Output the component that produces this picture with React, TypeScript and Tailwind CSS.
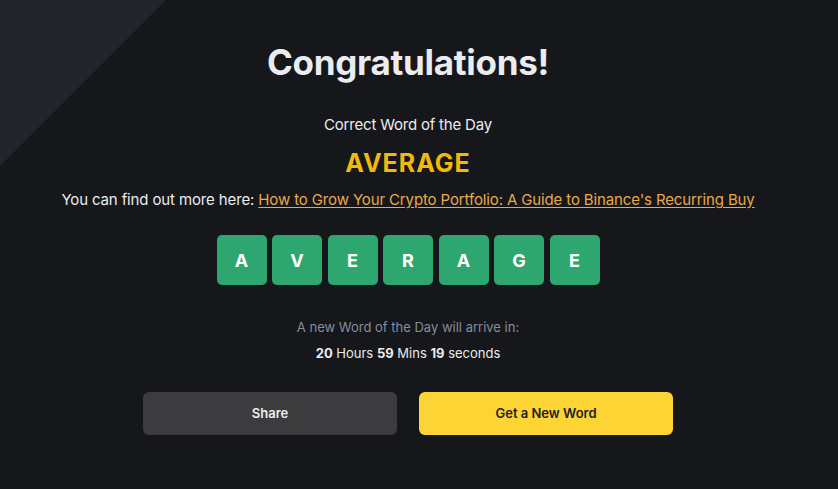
const word = ['A', 'V', 'E', 'R', 'A', 'G', 'E']

const App = () => {
  return (
    <div
      className="relative w-full h-[489px] overflow-hidden bg-[#16171b]"
      style={{ fontFamily: 'Inter, "Noto Sans", sans-serif' }}
    >
      <div className="absolute left-0 top-0 w-[166px] h-[166px] bg-[#23252c] [clip-path:polygon(0_0,100%_0,0_100%)]" />
      <div className="relative w-[816px] flex flex-col items-center pt-[38px]">
        <h1 className="text-[35px] leading-[48px] font-bold text-[#eaecef] tracking-[-0.3px]">
          Congratulations!
        </h1>
        <p className="mt-[29px] text-[15px] leading-[20px] text-[#eaecef] tracking-[-0.2px]">
          Correct Word of the Day
        </p>
        <p className="mt-[12px] text-[25px] leading-[32px] font-bold text-[#f0b90b] tracking-[1px]">
          AVERAGE
        </p>
        <p className="mt-[11px] text-[15px] leading-[20px] text-[#eaecef] tracking-[-0.13px]">
          You can find out more here:{' '}
          <a href="#" className="text-[#e8a94b] underline underline-offset-2">
            How to Grow Your Crypto Portfolio: A Guide to Binance's Recurring Buy
          </a>
        </p>
        <div className="mt-[25px] flex gap-[5.5px]">
          {word.map((l, i) => (
            <div
              key={i}
              className="w-[50px] h-[50px] rounded-[5px] bg-[#2ea66f] flex items-center justify-center text-[18px] font-bold text-white"
            >
              {l}
            </div>
          ))}
        </div>
        <p className="mt-[33px] text-[13px] leading-[18px] text-[#848e9c]">
          A new Word of the Day will arrive in:
        </p>
        <p className="mt-[8px] text-[13px] leading-[18px] text-[#eaecef]">
          <span className="font-bold">20</span> Hours <span className="font-bold">59</span> Mins{' '}
          <span className="font-bold">19</span> seconds
        </p>
        <div className="mt-[30px] flex gap-[22px]">
          <button className="w-[254px] h-[43px] rounded-[6px] bg-[#3c3c3e] text-[13px] font-semibold text-[#eaecef]">
            Share
          </button>
          <button className="w-[254px] h-[43px] rounded-[6px] bg-[#fcd535] text-[13px] font-semibold text-[#1e2026]">
            Get a New Word
          </button>
        </div>
      </div>
    </div>
  )
}

export default App
